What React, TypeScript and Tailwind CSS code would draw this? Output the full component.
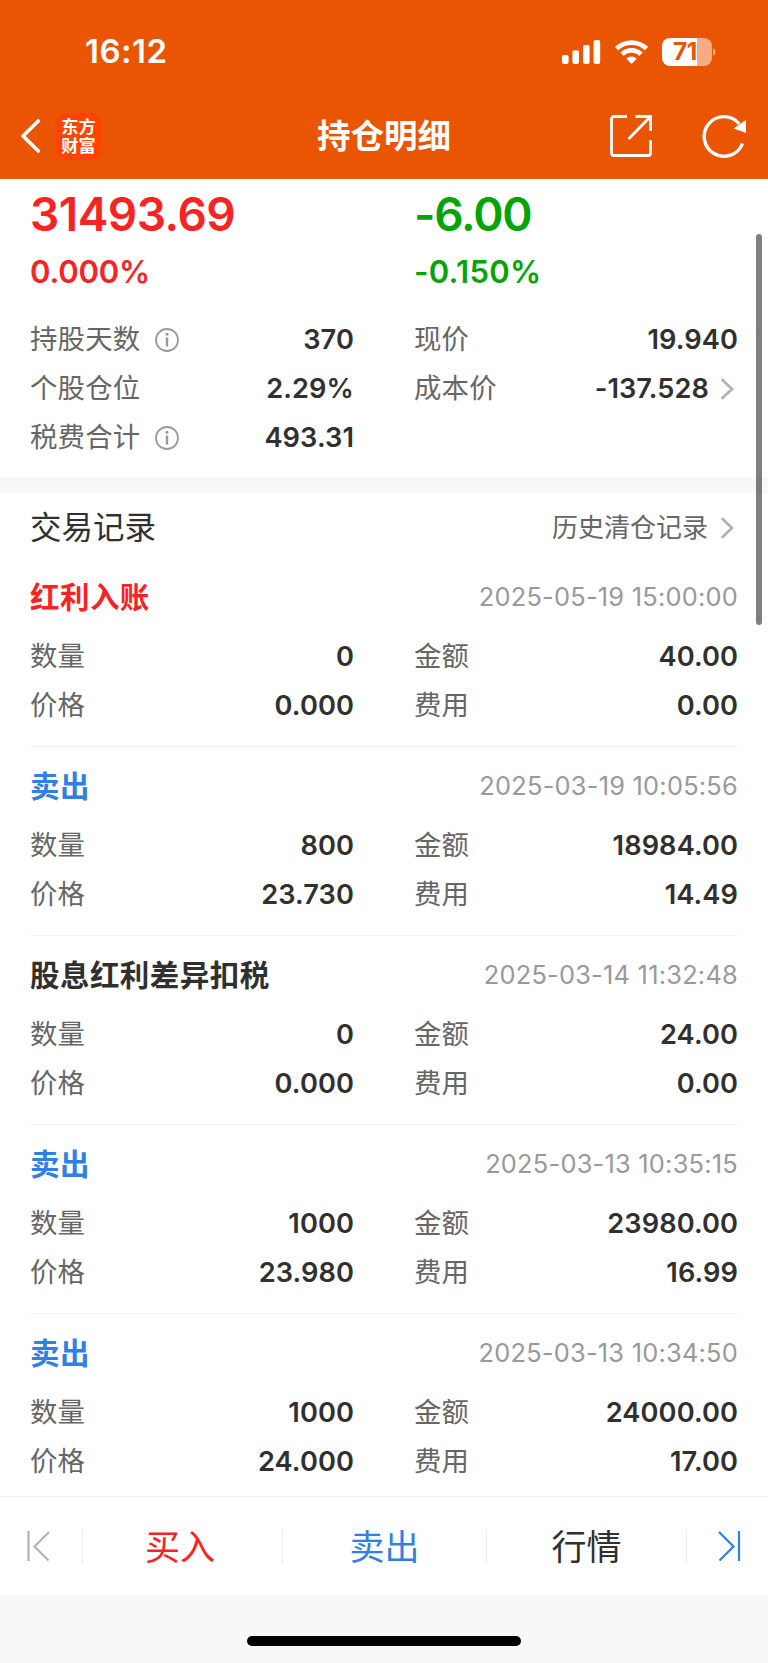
import type { ReactNode } from "react";

type TradeRecord = {
  title: string;
  color: string;
  time: string;
  quantity: string;
  amount: string;
  price: string;
  fee: string;
};

const records: TradeRecord[] = [
  {
    title: "红利入账",
    color: "text-[#f82323]",
    time: "2025-05-19 15:00:00",
    quantity: "0",
    amount: "40.00",
    price: "0.000",
    fee: "0.00",
  },
  {
    title: "卖出",
    color: "text-[#2f80e4]",
    time: "2025-03-19 10:05:56",
    quantity: "800",
    amount: "18984.00",
    price: "23.730",
    fee: "14.49",
  },
  {
    title: "股息红利差异扣税",
    color: "text-[#303030]",
    time: "2025-03-14 11:32:48",
    quantity: "0",
    amount: "24.00",
    price: "0.000",
    fee: "0.00",
  },
  {
    title: "卖出",
    color: "text-[#2f80e4]",
    time: "2025-03-13 10:35:15",
    quantity: "1000",
    amount: "23980.00",
    price: "23.980",
    fee: "16.99",
  },
  {
    title: "卖出",
    color: "text-[#2f80e4]",
    time: "2025-03-13 10:34:50",
    quantity: "1000",
    amount: "24000.00",
    price: "24.000",
    fee: "17.00",
  },
];

function InfoIcon() {
  return (
    <svg className="ml-[15px] h-6 w-6" viewBox="0 0 24 24" fill="none" stroke="#999" strokeWidth="1.8">
      <circle cx="12" cy="12" r="11" />
      <path d="M12 9.5v9" strokeWidth="2.4" />
      <circle cx="12" cy="6.2" r="1.5" fill="#999" stroke="none" />
    </svg>
  );
}

function ArrowIcon() {
  return (
    <svg className="mr-1 h-[22px] w-[13px]" viewBox="0 0 13 22" fill="none" stroke="#b3b3b3" strokeWidth="2.8" strokeLinecap="round">
      <path d="M1.5 2l9.5 9-9.5 9" />
    </svg>
  );
}

function Field({ label, value, info, arrow }: { label: string; value: string; info?: boolean; arrow?: boolean }) {
  return (
    <div className="flex h-[49.2px] items-center">
      <span className="text-[27.4px] leading-none tracking-[0.2px] text-[#666]">{label}</span>
      {info && <InfoIcon />}
      <span className="ml-auto text-[27.2px] leading-none font-semibold tracking-[0.1px] text-[#303030]">{value}</span>
      {arrow && (
        <span className="ml-[12px] flex">
          <ArrowIcon />
        </span>
      )}
    </div>
  );
}

function StatusBar() {
  return (
    <div className="flex h-[93px] items-center pt-[10px]">
      <span className="ml-[85px] w-[90px] text-[33px] leading-none font-semibold tracking-[0.5px]">16:12</span>
      <svg className="ml-auto h-6 w-[39px]" viewBox="0 0 39 24" fill="currentColor">
        <rect x="0" y="15" width="6.6" height="9" rx="2" />
        <rect x="10.4" y="10.3" width="6.6" height="13.7" rx="2" />
        <rect x="21" y="5" width="6.6" height="19" rx="2" />
        <rect x="31.6" y="0" width="6.6" height="24" rx="2" />
      </svg>
      <svg className="ml-[14px] h-6 w-[33px]" viewBox="0 0 33 24" fill="none" stroke="currentColor" strokeWidth="4.8">
        <path d="M1.6 8.6a21.5 21.5 0 0 1 29.8 0" />
        <path d="M7 14.3a13.6 13.6 0 0 1 19 0" />
        <path d="M16.5 24l-5.2-5.3a7.4 7.4 0 0 1 10.4 0z" fill="currentColor" stroke="none" />
      </svg>
      <div className="ml-[14px] flex h-7 w-[50px] items-center overflow-hidden rounded-[8px] bg-linear-to-r from-white from-70% to-[#f6ab83] to-70% pl-[11px]">
        <span className="text-[24.5px] leading-none font-bold tracking-[-0.5px] text-[#ea5504]">71</span>
      </div>
      <svg className="mr-[52px] ml-px h-2 w-[3px]" viewBox="0 0 3 8" fill="#f6ab83">
        <path d="M0 0a4.4 4.4 0 0 1 0 8z" />
      </svg>
    </div>
  );
}

function NavBar() {
  return (
    <div className="grid h-[86px] grid-cols-[1fr_auto_1fr] items-center">
      <div className="flex items-center">
        <svg className="ml-[20px] h-9 w-[21px]" viewBox="0 0 21 36" fill="none" stroke="currentColor" strokeWidth="3.8" strokeLinecap="round" strokeLinejoin="round">
          <path d="M18.3 3L3 18l15.3 15" />
        </svg>
        <div className="ml-[14px] flex h-[47px] w-[47px] flex-col items-center justify-center rounded-[10px] bg-[#ff4400] text-[17.2px] leading-[19.5px] font-bold">
          <span>东方</span>
          <span>财富</span>
        </div>
      </div>
      <h1 className="pt-[2px] text-[33.5px] leading-none font-bold">持仓明细</h1>
      <div className="flex items-center justify-end">
        <svg className="h-11 w-11" viewBox="0 0 44 44" fill="none" stroke="currentColor" strokeWidth="2.8">
          <path d="M18 2.5H5A2.5 2.5 0 0 0 2.5 5v34A2.5 2.5 0 0 0 5 41.5h34a2.5 2.5 0 0 0 2.500-2.500V26" />
          <path d="M26.5 2.5h15V17" />
          <path d="M41 3L19.5 25" />
        </svg>
        <svg className="mr-[21px] ml-[49px] h-11 w-[45px]" viewBox="0 0 45 44" fill="none" stroke="currentColor" strokeWidth="3.4">
          <path d="M40.5 29.5A19.8 19.8 0 1 1 37.2 9.8" />
          <path d="M44 6v13l-12.5-4.500z" fill="currentColor" stroke="none" />
        </svg>
      </div>
    </div>
  );
}

function RecordItem({ record }: { record: TradeRecord }) {
  return (
    <div className="h-[189px] border-b border-[#f1f2f4]">
      <div className="flex h-[74px] items-center justify-between pt-1">
        <span className={`pt-px text-[29.5px] leading-none font-bold tracking-[0.45px] ${record.color}`}>{record.title}</span>
        <span className="text-[25.4px] leading-none tracking-[0.23px] text-[#999]">{record.time}</span>
      </div>
      <div className="grid grid-cols-2 gap-x-[60px]">
        <Field label="数量" value={record.quantity} />
        <Field label="金额" value={record.amount} />
        <Field label="价格" value={record.price} />
        <Field label="费用" value={record.fee} />
      </div>
    </div>
  );
}

function FooterButton({ children, className }: { children: ReactNode; className: string }) {
  return (
    <button className={`h-[33px] border-l border-[#ededed] pb-[2px] text-[35px] leading-none ${className}`}>{children}</button>
  );
}

export default function App() {
  return (
    <div className="relative flex h-[1663px] w-[768px] flex-col overflow-hidden bg-white font-['Inter','Noto_Sans_CJK_SC',sans-serif]">
      <header className="h-[179px] shrink-0 bg-[#ea5504] text-white">
        <StatusBar />
        <NavBar />
      </header>

      <main className="min-h-0 flex-1 overflow-hidden">
        <section className="h-[298px] px-[30px]">
          <div className="grid grid-cols-2 gap-x-[60px] font-semibold">
            <div className="text-[#f82323]">
              <p className="text-[46px] leading-[71px] tracking-[-0.5px]">31493.69</p>
              <p className="text-[31px] leading-[44px] tracking-[-0.2px]">0.000%</p>
            </div>
            <div className="text-[#04a404]">
              <p className="text-[46px] leading-[71px] tracking-[-1.2px]">-6.00</p>
              <p className="text-[31px] leading-[44px] tracking-[0.3px]">-0.150%</p>
            </div>
          </div>
          <div className="mt-[21px] grid grid-cols-2 gap-x-[60px]">
            <Field label="持股天数" value="370" info />
            <Field label="现价" value="19.940" />
            <Field label="个股仓位" value="2.29%" />
            <Field label="成本价" value="-137.528" arrow />
            <Field label="税费合计" value="493.31" info />
          </div>
        </section>

        <div className="h-4 bg-[#f6f8fa]" />

        <section className="px-[30px]">
          <div className="flex h-[65px] items-center pt-[5px]">
            <h2 className="text-[31.5px] leading-none text-[#303030]">交易记录</h2>
            <span className="mr-[13px] ml-auto text-[26px] leading-none text-[#666]">历史清仓记录</span>
            <ArrowIcon />
          </div>
          {records.map((record) => (
            <RecordItem key={record.time} record={record} />
          ))}
        </section>
      </main>

      <footer className="shrink-0 bg-[#f6f8fa]">
        <div className="flex h-[99px] items-center border-t border-[#f0f0f0] bg-white">
          <div className="flex w-[82px] items-center">
            <svg className="ml-[27px] h-[30px] w-[23px]" viewBox="0 0 23 30" fill="none" stroke="#b3b3b3" strokeWidth="2.2">
              <path d="M1.5 0v30M22 1L7.5 15.5 21.5 29.5" />
            </svg>
          </div>
          <FooterButton className="w-[200px] pr-[5px] text-[#f82323]">买入</FooterButton>
          <FooterButton className="w-[204px] text-[#2f80e4]">卖出</FooterButton>
          <FooterButton className="w-[200px] text-[#303030]">行情</FooterButton>
          <div className="flex h-[33px] w-[82px] items-center border-l border-[#ededed]">
            <svg className="ml-[31px] h-[30px] w-[23px]" viewBox="0 0 23 30" fill="none" stroke="#2f80e4" strokeWidth="2.2">
              <path d="M21 0v30M1 1l14.5 14.5L1.5 29.5" />
            </svg>
          </div>
        </div>
        <div className="flex h-[68px] justify-center pt-[41px]">
          <div className="h-[10px] w-[274px] rounded-full bg-black" />
        </div>
      </footer>

      <div className="absolute top-[234px] right-[6px] h-[391px] w-[6px] rounded-full bg-black/50" />
    </div>
  );
}
